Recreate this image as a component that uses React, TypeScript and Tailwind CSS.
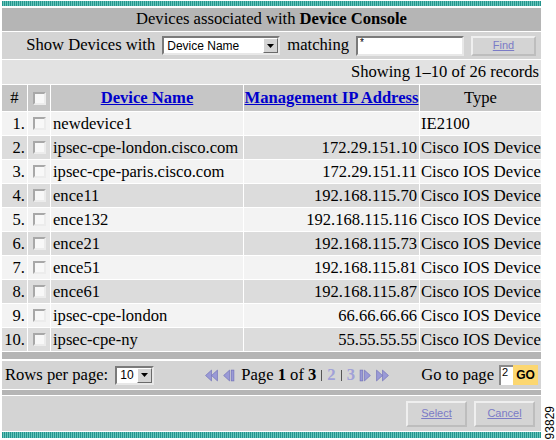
import React from "react";

const serif = "font-['Liberation_Serif','Times_New_Roman',serif]";
const sans = "font-['Liberation_Sans',Arial,sans-serif]";

const devices = [
  { name: "newdevice1", ip: "", type: "IE2100" },
  { name: "ipsec-cpe-london.cisco.com", ip: "172.29.151.10", type: "Cisco IOS Device" },
  { name: "ipsec-cpe-paris.cisco.com", ip: "172.29.151.11", type: "Cisco IOS Device" },
  { name: "ence11", ip: "192.168.115.70", type: "Cisco IOS Device" },
  { name: "ence132", ip: "192.168.115.116", type: "Cisco IOS Device" },
  { name: "ence21", ip: "192.168.115.73", type: "Cisco IOS Device" },
  { name: "ence51", ip: "192.168.115.81", type: "Cisco IOS Device" },
  { name: "ence61", ip: "192.168.115.87", type: "Cisco IOS Device" },
  { name: "ipsec-cpe-london", ip: "66.66.66.66", type: "Cisco IOS Device" },
  { name: "ipsec-cpe-ny", ip: "55.55.55.55", type: "Cisco IOS Device" },
];

function TealStrip({ className }: { className?: string }) {
  return (
    <div
      className={
        "bg-[repeating-linear-gradient(90deg,#23958d_0px,#23958d_1px,#67c3ba_1px,#67c3ba_2px)] " +
        (className ?? "")
      }
    />
  );
}

function Box() {
  return (
    <span className="inline-block w-[13px] h-[13px] border-2 border-t-[#a8a8a8] border-l-[#a8a8a8] border-r-[#ececec] border-b-[#ececec] bg-[#f8f8f8]" />
  );
}

function SelectBox({ label, width }: { label: string; width: string }) {
  return (
    <div
      className={`${width} h-[19px] flex items-center bg-white border-2 border-t-[#7a7a7a] border-l-[#7a7a7a] border-r-[#e8e8e8] border-b-[#e8e8e8]`}
    >
      <span className={`${sans} flex-1 pl-[3px] text-[12px] leading-none text-black`}>{label}</span>
      <span className="w-[15px] h-[15px] flex items-center justify-center bg-[#d4d4d4] border border-t-white border-l-white border-r-[#6a6a6a] border-b-[#6a6a6a]">
        <svg width="7" height="4" viewBox="0 0 7 4">
          <polygon points="0,0 7,0 3.5,4" fill="#000" />
        </svg>
      </span>
    </div>
  );
}

function PagerIcon({ kind }: { kind: "first" | "prev" | "next" | "last" }) {
  const fill = "#9a9ad6";
  const stroke = "#7070b8";
  return (
    <svg width="13" height="13" viewBox="0 0 12 12">
      {kind === "first" && (
        <>
          <polygon points="6,1 0.5,6 6,11" fill={fill} stroke={stroke} strokeWidth="0.6" />
          <polygon points="11.5,1 6,6 11.5,11" fill={fill} stroke={stroke} strokeWidth="0.6" />
        </>
      )}
      {kind === "prev" && (
        <>
          <polygon points="7,1 1.5,6 7,11" fill={fill} stroke={stroke} strokeWidth="0.6" />
          <rect x="8.5" y="1" width="2.5" height="10" fill={fill} stroke={stroke} strokeWidth="0.6" />
        </>
      )}
      {kind === "next" && (
        <>
          <rect x="1" y="1" width="2.5" height="10" fill={fill} stroke={stroke} strokeWidth="0.6" />
          <polygon points="5,1 10.5,6 5,11" fill={fill} stroke={stroke} strokeWidth="0.6" />
        </>
      )}
      {kind === "last" && (
        <>
          <polygon points="0.5,1 6,6 0.5,11" fill={fill} stroke={stroke} strokeWidth="0.6" />
          <polygon points="6,1 11.5,6 6,11" fill={fill} stroke={stroke} strokeWidth="0.6" />
        </>
      )}
    </svg>
  );
}

function FlatButton({ label, className }: { label: string; className?: string }) {
  return (
    <div
      className={`${className ?? ""} flex items-center justify-center bg-[#d4d4d4] border-2 border-t-[#efefef] border-l-[#efefef] border-r-[#bdbdbd] border-b-[#bdbdbd]`}
    >
      <span className={`${sans} text-[11px] text-[#7b7bc6] underline`}>{label}</span>
    </div>
  );
}

function Sep() {
  return <span className="inline-block mx-[5px] w-px h-[11px] bg-[#555]" />;
}

export default function App() {
  return (
    <div className={`${serif} w-[556px] h-[440px] bg-white flex text-black text-[16.6px] leading-none`}>
      <div className="w-[541px] pl-[2px] flex flex-col">
        <TealStrip className="mt-px h-[5px]" />

        <div className="mt-[2px] h-[23px] bg-[#b5b5b5] flex items-center justify-center">
          Devices associated with&nbsp;<b>Device Console</b>
        </div>

        <div className="mt-px h-[27px] bg-[#d4d4d4] flex items-center justify-end gap-[7px] pr-[5px]">
          <span>Show Devices with</span>
          <SelectBox label="Device Name" width="w-[118px]" />
          <span>matching</span>
          <div className="w-[108px] h-[20px] bg-white border-2 border-t-[#7a7a7a] border-l-[#7a7a7a] border-r-[#e8e8e8] border-b-[#e8e8e8] pl-[2px]">
            <span className={`${sans} text-[10px] leading-none align-top`}>*</span>
          </div>
          <FlatButton label="Find" className="w-[65px] h-[20px]" />
        </div>

        <div className="mt-px h-[24px] bg-[#e2e2e2] flex items-center justify-end pr-[2px]">
          Showing 1–10 of 26 records
        </div>

        <div className="mt-px grid grid-cols-[25px_22px_192px_175px_121px] gap-px bg-white">
          <div className="h-[26px] bg-[#c6c6c6] flex items-center justify-center">#</div>
          <div className="h-[26px] bg-[#c6c6c6] flex items-center justify-center">
            <Box />
          </div>
          <div className="h-[26px] bg-[#c6c6c6] flex items-center justify-center">
            <span className="font-bold text-[#0000cc] underline">Device Name</span>
          </div>
          <div className="h-[26px] bg-[#c6c6c6] flex items-center justify-center">
            <span className="font-bold text-[#0000cc] underline whitespace-nowrap">Management IP Address</span>
          </div>
          <div className="h-[26px] bg-[#c6c6c6] flex items-center justify-center">Type</div>

          {devices.map((d, i) => {
            const bg = i % 2 === 0 ? "bg-[#f3f3f3]" : "bg-[#dcdcdc]";
            return (
              <React.Fragment key={i}>
                <div className={`${bg} h-[23px] pt-px flex items-center justify-end pr-[2px]`}>{i + 1}.</div>
                <div className={`${bg} h-[23px] flex items-center justify-center`}>
                  <Box />
                </div>
                <div className={`${bg} h-[23px] pt-px flex items-center pl-[2px] whitespace-nowrap`}>{d.name}</div>
                <div className={`${bg} h-[23px] pt-px flex items-center justify-end pr-[2px]`}>{d.ip}</div>
                <div className={`${bg} h-[23px] pt-px flex items-center pl-[1px] whitespace-nowrap overflow-hidden`}>{d.type}</div>
              </React.Fragment>
            );
          })}
        </div>

        <div className="mt-px h-[7px] bg-[#b5b5b5]" />

        <div className="mt-[2px] h-[28px] bg-[#d4d4d4] flex items-center pl-[3px] pr-[3px]">
          <span>Rows per page:</span>
          <div className="ml-[7px]">
            <SelectBox label="10" width="w-[39px]" />
          </div>
          <div className="ml-[51px] flex items-center gap-[4px]">
            <PagerIcon kind="first" />
            <PagerIcon kind="prev" />
            <span className="ml-[2px] whitespace-nowrap flex items-center">
              Page&nbsp;<b>1</b>&nbsp;of&nbsp;<b>3</b>
              <Sep />
              <b className="text-[#a0a0d8]">2</b>
              <Sep />
              <b className="text-[#a0a0d8]">3</b>
            </span>
            <PagerIcon kind="next" />
            <PagerIcon kind="last" />
          </div>
          <div className="ml-auto flex items-center">
            <span>Go to page</span>
            <div className="ml-[5px] w-[14px] h-[20px] bg-white border-t-2 border-l-2 border-[#8a8a8a]">
              <span className={`${sans} text-[11px] leading-none align-top pl-px`}>2</span>
            </div>
            <div className={`${sans} w-[25px] h-[20px] bg-[#fcd771] flex items-center justify-center font-bold text-[12px]`}>
              GO
            </div>
          </div>
        </div>

        <div className="mt-px h-[5px] bg-[#b5b5b5]" />

        <div className="mt-px h-[35px] bg-[#d4d4d4] flex items-center justify-end gap-[7px] pr-[6px]">
          <FlatButton label="Select" className="w-[61px] h-[26px]" />
          <FlatButton label="Cancel" className="w-[61px] h-[26px]" />
        </div>

        <TealStrip className="mt-px h-[6px]" />
      </div>

      <div className="flex-1 flex items-end justify-end pb-[1px]">
        <span className={`${sans} text-[12px] leading-none [writing-mode:vertical-rl] rotate-180`}>93829</span>
      </div>
    </div>
  );
}
